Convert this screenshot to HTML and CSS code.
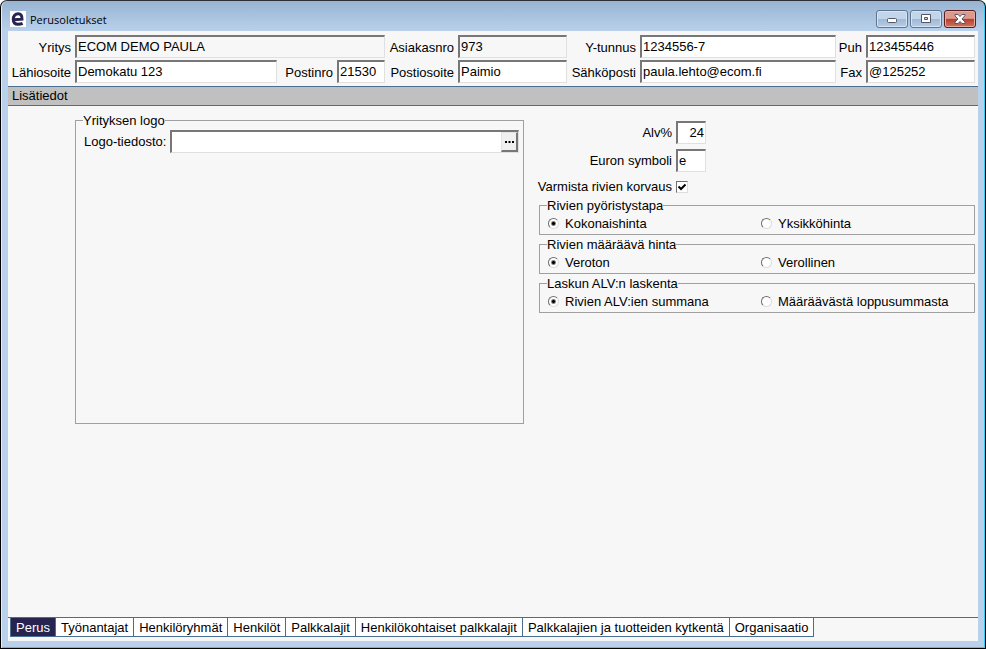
FILE: index.html
```
<!DOCTYPE html>
<html lang="fi">
<head>
    <meta charset="utf-8">
    <title>Perusoletukset</title>
    <link rel="stylesheet" href="styles.css">
</head>
<body>
    <div class="window">
        <header class="titlebar">
            <svg class="logo" viewBox="0 0 16 16" aria-hidden="true">
                <rect width="16" height="16" fill="#fff"/>
                <path d="M3.5 8.800 L12 8.200 C12.200 4.500 10.800 2.700 8.200 2.700 C5.200 2.700 3.300 5 3.300 8.400 C3.300 11.900 5.200 13.200 8.200 13.200 C9.900 13.200 11.400 12.900 12.600 12.300" fill="none" stroke="#27244f" stroke-width="3"/>
            </svg>
            <h1>Perusoletukset</h1>
            <div class="window-buttons">
                <button type="button" aria-label="Pienennä">
                    <svg width="12" height="12" viewBox="0 0 12 12"><rect x="1.500" y="5.500" width="9" height="4" rx="1" fill="#fff" stroke="#535666"/></svg>
                </button>
                <button type="button" aria-label="Suurenna">
                    <svg width="12" height="12" viewBox="0 0 12 12"><path d="M1.500 1.500h9v8h-9z M4.500 4.500v2h3v-2z" fill="#fff" fill-rule="evenodd" stroke="#535666"/></svg>
                </button>
                <button type="button" class="close" aria-label="Sulje">
                    <svg width="12" height="12" viewBox="0 0 12 12"><path d="M1 1.500h3l2 2 2-2h3v1L8 6l3 3v1.500H8l-2-2-2 2H1V9l3-3-3-3z" fill="#fff" stroke="#535666"/></svg>
                </button>
            </div>
        </header>

        <form class="content">
            <div class="company">
                <label for="yritys">Yritys</label>
                <input id="yritys" class="wide" type="text" value="ECOM DEMO PAULA" readonly>
                <label for="asiakasnro">Asiakasnro</label>
                <input id="asiakasnro" type="text" value="973" readonly>
                <label for="ytunnus">Y-tunnus</label>
                <input id="ytunnus" type="text" value="1234556-7">
                <label for="puh">Puh</label>
                <input id="puh" type="text" value="123455446">

                <label for="lahiosoite">Lähiosoite</label>
                <input id="lahiosoite" type="text" value="Demokatu 123">
                <label for="postinro">Postinro</label>
                <input id="postinro" type="text" value="21530">
                <label for="postiosoite">Postiosoite</label>
                <input id="postiosoite" type="text" value="Paimio">
                <label for="sahkoposti">Sähköposti</label>
                <input id="sahkoposti" type="text" value="paula.lehto@ecom.fi">
                <label for="fax">Fax</label>
                <input id="fax" type="text" value="@125252">
            </div>

            <h2 class="section-title">Lisätiedot</h2>

            <main class="details">
                <fieldset class="logo-box">
                    <legend>Yrityksen logo</legend>
                    <div class="file-row">
                        <label for="logo">Logo-tiedosto:</label>
                        <div class="file-field">
                            <input id="logo" type="text">
                            <button type="button" aria-label="Selaa">
                                <svg width="9" height="2" viewBox="0 0 9 2"><path d="M0 0h2v2H0zM3.500 0h2v2h-2zM7 0h2v2H7z"/></svg>
                            </button>
                        </div>
                    </div>
                </fieldset>

                <div class="settings">
                    <div class="general">
                        <label for="alv">Alv%</label>
                        <input id="alv" class="number" type="text" value="24">
                        <label for="euro">Euron symboli</label>
                        <input id="euro" type="text" value="e">
                        <label for="varmista">Varmista rivien korvaus</label>
                        <input id="varmista" type="checkbox" checked>
                    </div>
                    <fieldset>
                        <legend>Rivien pyöristystapa</legend>
                        <div class="options">
                            <label><input type="radio" name="pyoristys" checked>Kokonaishinta</label>
                            <label><input type="radio" name="pyoristys">Yksikköhinta</label>
                        </div>
                    </fieldset>
                    <fieldset>
                        <legend>Rivien määräävä hinta</legend>
                        <div class="options">
                            <label><input type="radio" name="hinta" checked>Veroton</label>
                            <label><input type="radio" name="hinta">Verollinen</label>
                        </div>
                    </fieldset>
                    <fieldset>
                        <legend>Laskun ALV:n laskenta</legend>
                        <div class="options">
                            <label><input type="radio" name="laskenta" checked>Rivien ALV:ien summana</label>
                            <label><input type="radio" name="laskenta">Määräävästä loppusummasta</label>
                        </div>
                    </fieldset>
                </div>
            </main>

            <nav class="tabs">
                <button type="button" class="active">Perus</button>
                <button type="button">Työnantajat</button>
                <button type="button">Henkilöryhmät</button>
                <button type="button">Henkilöt</button>
                <button type="button">Palkkalajit</button>
                <button type="button">Henkilökohtaiset palkkalajit</button>
                <button type="button">Palkkalajien ja tuotteiden kytkentä</button>
                <button type="button">Organisaatio</button>
            </nav>
        </form>
    </div>
</body>
</html>
```
FILE: styles.css
```
*{
    box-sizing: border-box;
}
body{
    margin: 0;
    background-color: #fff;
    font-family: "Liberation Sans", Arial, sans-serif;
    font-size: 13px;
    line-height: 15px;
    color: #000;
}
input, button{
    font: inherit;
    color: inherit;
}
h1, h2{
    margin: 0;
    font-weight: normal;
}
label, legend{
    white-space: nowrap;
}
.window{
    display: flex;
    flex-direction: column;
    min-height: 100vh;
    padding: 0 6px 7px;
    border: 1px solid #000;
    border-top-color: #2e2e36;
    border-radius: 7px 7px 0 0;
    background: linear-gradient(#98b4d3, #b9d1ea 30px);
    box-shadow: inset 1px 0 #e4eef8, inset -1px -1px #35cdf0;
}

/* title bar */
.titlebar{
    display: flex;
    align-items: center;
    height: 30px;
    padding: 6px 3px 0 3px;
}
.logo{
    width: 16px;
    height: 16px;
}
.titlebar h1{
    flex: 1;
    margin-left: 4px;
    font-family: "Open Sans", sans-serif;
    font-size: 11px;
}
.window-buttons{
    display: flex;
    gap: 2px;
}
.window-buttons button{
    display: flex;
    align-items: center;
    justify-content: center;
    width: 32px;
    height: 18px;
    padding: 0;
    border: 1px solid #5f7590;
    border-radius: 3px;
    background: linear-gradient(#c3d5ea 48%, #9fb9d6 52%, #b6cde6);
    box-shadow: inset 0 0 0 1px #d6e4f3;
}
.window-buttons .close{
    border-color: #571c20;
    background: linear-gradient(#dc9a8e 46%, #b9402b 52%, #cd7460);
    box-shadow: inset 0 0 0 1px #e5aea4;
}

/* client area */
.content{
    display: flex;
    flex: 1;
    flex-direction: column;
    margin: 0 1px;
    background-color: #f7f7f7;
}
.company{
    display: grid;
    grid-template-columns: 59px 202fr 52px 48px 65px 109fr 65px 196fr 22px 109fr;
    gap: 2px 4px;
    padding: 4px 3px 3px 4px;
    align-items: center;
}
.company label{
    justify-self: end;
    padding-top: 2px;
}
.company .wide{
    grid-column: span 3;
}
input[type="text"]{
    width: 100%;
    min-width: 0;
    height: 23px;
    padding: 0 1px 1px;
    border: 1px solid #e0e0e0;
    border-top: 2px solid #777;
    border-left: 2px solid #777;
    border-radius: 0;
    outline: none;
    background-color: #fff;
}
input[type="text"]:read-only{
    background-color: #f7f7f7;
}
.section-title{
    height: 20px;
    padding: 0 4px;
    border-top: 1px solid #4a6d92;
    border-bottom: 1px solid #4a6d92;
    background-color: #c0c0c0;
    font-size: 13px;
    line-height: 17px;
}

/* details */
.details{
    display: grid;
    flex: 1;
    grid-template-columns: 449fr 436fr;
    gap: 15px;
    align-items: start;
    padding: 6px 3px 16px 67px;
}
fieldset{
    min-width: 0;
    margin: 0;
    padding: 0 0 0 7px;
    border: 1px solid #a0a0a0;
}
legend{
    padding: 2px 0 0;
    line-height: 14px;
}
.logo-box{
    height: 312px;
    padding: 0 4px 0 8px;
}
.logo-box legend{
    margin-left: -1px;
}
.file-row{
    display: flex;
    gap: 4px;
    align-items: center;
    padding-top: 2px;
}
.file-field{
    display: flex;
    flex: 1;
    border: 1px solid #e0e0e0;
    border-top: 2px solid #777;
    border-left: 2px solid #777;
    background-color: #fff;
}
.file-field input[type="text"]{
    flex: 1;
    height: 20px;
    border: none;
}
.file-field button{
    display: flex;
    align-items: center;
    justify-content: center;
    width: 17px;
    height: 20px;
    padding: 0;
    border: 1px solid #e3e3e3;
    border-right: 2px solid #777;
    border-bottom: 2px solid #777;
    background-color: #f0f0f0;
}
.settings{
    display: flex;
    flex-direction: column;
    gap: 1px;
}
.general{
    display: grid;
    grid-template-columns: 133px 30px;
    grid-template-rows: 23px 23px 19px;
    gap: 5px 4px;
    align-items: center;
    padding-top: 9px;
}
.general label{
    justify-self: end;
}
.number{
    text-align: right;
}
input[type="checkbox"], input[type="radio"]{
    appearance: none;
    flex: none;
    margin: 0;
    background-color: #fff;
    border: 1px solid #dcdcdc;
    border-top-color: #6e6e6e;
    border-left-color: #6e6e6e;
}
input[type="checkbox"]{
    width: 12px;
    height: 12px;
}
input[type="checkbox"]:checked{
    background-image: url("data:image/svg+xml,%3Csvg xmlns='http://www.w3.org/2000/svg' viewBox='0 0 10 10'%3E%3Cpath d='M1.500 4.500L4 7L8.500 2.500' fill='none' stroke='black' stroke-width='2'/%3E%3C/svg%3E");
}
input[type="radio"]{
    width: 11px;
    height: 11px;
    border-radius: 50%;
}
input[type="radio"]:checked{
    background-image: radial-gradient(circle, #000 1px, transparent 3px);
}
.options{
    display: grid;
    grid-template-columns: 1fr 1fr;
    height: 21px;
    padding-left: 1px;
}
.options label{
    display: flex;
    gap: 6px;
    align-items: center;
}

/* bottom tabs */
.tabs{
    display: flex;
    padding: 0 2px 4px;
    border-top: 1px solid #4a6d92;
}
.tabs button{
    height: 19px;
    padding: 0 5px;
    border: 1px solid #4a6d92;
    border-top: none;
    border-left: none;
    background-color: #fff;
    white-space: nowrap;
}
.tabs button:first-child{
    border-left: 1px solid #4a6d92;
}
.tabs .active{
    background-color: #27244f;
    color: #fff;
}
```
